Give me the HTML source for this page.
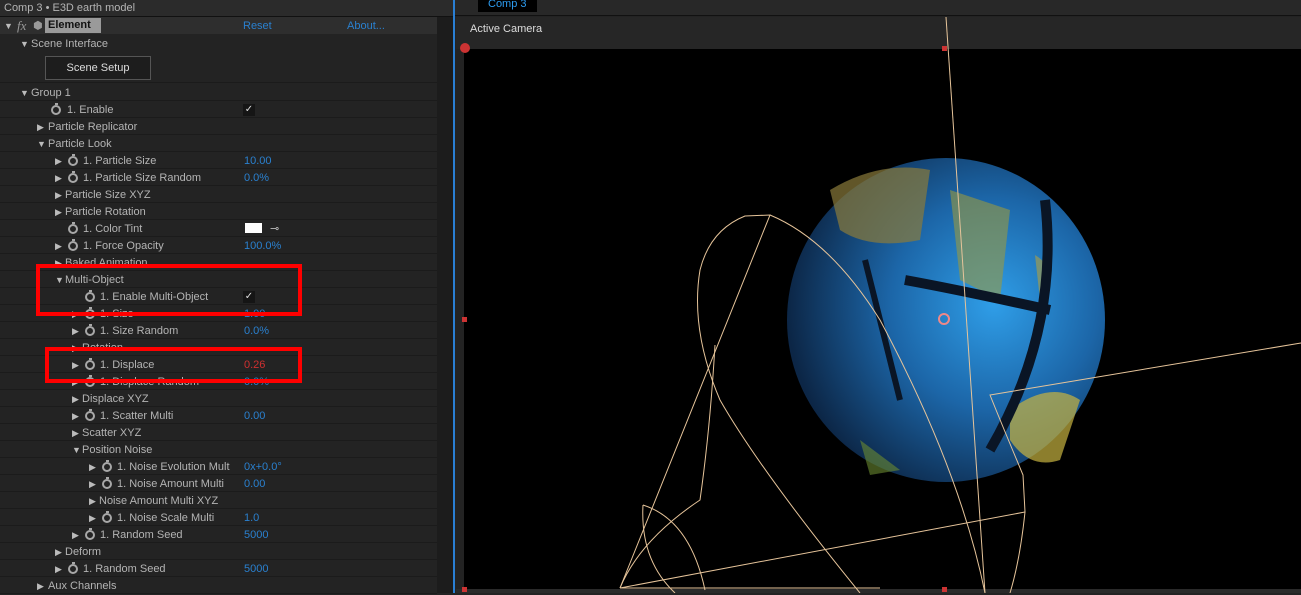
<!DOCTYPE html>
<html><head><style>
*{margin:0;padding:0;box-sizing:border-box}
body{width:1301px;height:593px;background:#232323;font-family:"Liberation Sans","DejaVu Sans",sans-serif;font-size:11px;color:#b4b4b4;position:relative;overflow:hidden}
.a{position:absolute;white-space:nowrap}
.row{position:absolute;left:0;width:437px;height:17px;border-bottom:1px solid #1b1b1b}
.t{position:absolute;line-height:18px}
.v{position:absolute;line-height:18px;color:#2a80cf}
.sw{position:absolute;width:10px;height:10px;border:2px solid #a8a8a8;border-radius:50%;top:4px}
.sw:before{content:"";position:absolute;left:2px;top:-4px;width:3px;height:2px;background:#a8a8a8}
.tri{position:absolute;font-size:9px;line-height:18px;color:#bbb}
.chk{position:absolute;width:12px;height:12px;background:#151515;color:#ddd;font-size:10px;line-height:12px;text-align:center;top:3px}
.rb{position:absolute;border:4px solid #f00}
</style></head><body>
<div class="a" style="left:0;top:0;width:454px;height:17px;background:#2b2b2b;border-bottom:1px solid #111"><span class="t" style="left:4px;top:-1px;position:absolute">Comp 3 • E3D earth model</span></div>
<div class="a" style="left:0;top:17px;width:437px;height:17px;background:#2e2e2e"></div>
<span class="tri" style="left:4px;top:17px">▼</span>
<span class="t" style="left:17px;top:17px;font-style:italic;color:#999;font-family:'Liberation Serif',serif;font-size:13px">fx</span>
<span class="t" style="left:33px;top:17px;color:#999">⬢</span>
<div class="a" style="left:45px;top:18px;width:56px;height:15px;background:#9a9a9a;color:#111;font-weight:bold;line-height:15px;padding-left:3px">Element</div>
<span class="v" style="left:243px;top:17px">Reset</span>
<span class="v" style="left:347px;top:17px">About...</span>
<span class="tri" style="left:20px;top:35px">▼</span><span class="t" style="left:31px;top:35px">Scene Interface</span>
<div class="a" style="left:45px;top:56px;width:106px;height:24px;background:#1d1d1d;border:1px solid #555;color:#ddd;text-align:center;line-height:22px;font-size:11px">Scene Setup</div>
<div class="row" style="top:66px;height:17px;border-bottom:1px solid #1b1b1b;background:transparent"></div>
<div id="rows"></div>
<div class="a" style="left:437px;top:17px;width:16px;height:576px;background:#1c1c1c"></div>
<div class="a" style="left:453px;top:0;width:2px;height:593px;background:#2a7fd4"></div>
<div class="a" style="left:455px;top:0;width:846px;height:16px;background:#282828;border-bottom:1px solid #111"></div>
<div class="a" style="left:478px;top:0;width:59px;height:12px;background:#000;color:#2d9cf0;line-height:9px;padding-left:10px">Comp 3</div>
<div class="a" style="left:456px;top:17px;width:845px;height:32px;background:#262626"></div>
<span class="a" style="left:470px;top:23px;color:#ddd">Active Camera</span>
<div class="a" style="left:464px;top:49px;width:837px;height:540px;background:#000"></div>
<div class="a" style="left:456px;top:589px;width:845px;height:4px;background:#2a2a2a"></div>
<svg class="a" style="left:0;top:0" width="1301" height="593">
<defs>
<radialGradient id="g" cx="0.65" cy="0.45" r="0.65">
<stop offset="0" stop-color="#2f9ee8"/><stop offset="0.5" stop-color="#1c66a8"/><stop offset="1" stop-color="#0c2646"/>
</radialGradient>
</defs>
<ellipse cx="946" cy="320" rx="159" ry="162" fill="url(#g)"/>
<path d="M830 190 Q880 160 930 170 L920 240 Q870 250 840 230Z" fill="#8a7a3a" opacity=".7"/>
<path d="M950 190 L1010 210 L1000 300 L960 280Z" fill="#9a9a40" opacity=".6"/>
<path d="M1010 410 Q1050 380 1080 400 L1060 460 Q1030 470 1010 440Z" fill="#c8b440" opacity=".7"/>
<path d="M1035 255 Q1060 270 1040 300 Z" fill="#b0a040" opacity=".6"/>
<path d="M860 440 L900 470 L870 475Z" fill="#6a8a30" opacity=".6"/>
<path d="M905 280 Q960 290 1050 310" stroke="#0a1525" stroke-width="10" fill="none"/>
<path d="M1045 200 Q1060 330 990 450" stroke="#0a1525" stroke-width="10" fill="none"/>
<path d="M865 260 L900 400" stroke="#0a1525" stroke-width="6" fill="none"/>
<g stroke="#e6c49a" stroke-width="1" fill="none">
<path d="M946 17 L985 593"/>
<path d="M620 588 L1025 512 L1023 475 Q1000 420 990 395 L1301 343"/>
<path d="M620 588 L770 215 L745 216 Q710 230 700 270 Q690 330 720 400 Q760 470 860 593"/>
<path d="M770 215 Q830 240 880 320 Q960 470 985 593"/>
<path d="M620 588 Q640 540 700 500 Q710 430 715 345"/>
<path d="M620 588 L880 588"/>
<path d="M643 505 Q690 520 705 590 M643 505 Q640 560 675 593"/>
<path d="M1025 512 Q1020 560 1010 593"/>
</g>
<circle cx="944" cy="319" r="5" fill="none" stroke="#e88" stroke-width="2"/>
<circle cx="465" cy="48" r="5" fill="#c33"/>
<rect x="942" y="46" width="5" height="5" fill="#c33"/>
<rect x="462" y="317" width="5" height="5" fill="#c33"/>
<rect x="942" y="587" width="5" height="5" fill="#c33"/>
<rect x="462" y="587" width="5" height="5" fill="#c33"/>
</svg>
<div class="rb" style="left:36px;top:264px;width:266px;height:52px"></div>
<div class="rb" style="left:45px;top:347px;width:257px;height:36px"></div>
<script>
var R=[
[92,'▼',20,0,31,'Group 1'],
[109,'',0,51,67,'1. Enable','chk'],
[126,'▶',37,0,48,'Particle Replicator'],
[143,'▼',37,0,48,'Particle Look'],
[160,'▶',55,68,83,'1. Particle Size','10.00'],
[177,'▶',55,68,83,'1. Particle Size Random','0.0%'],
[194,'▶',55,0,65,'Particle Size XYZ'],
[211,'▶',55,0,65,'Particle Rotation'],
[228,'',0,68,83,'1. Color Tint','tint'],
[245,'▶',55,68,83,'1. Force Opacity','100.0%'],
[262,'▶',55,0,65,'Baked Animation'],
[279,'▼',55,0,65,'Multi-Object'],
[296,'',0,85,100,'1. Enable Multi-Object','chk'],
[313,'▶',72,85,100,'1. Size','1.00'],
[330,'▶',72,85,100,'1. Size Random','0.0%'],
[347,'▶',72,0,82,'Rotation'],
[364,'▶',72,85,100,'1. Displace','R0.26'],
[381,'▶',72,85,100,'1. Displace Random','0.0%'],
[398,'▶',72,0,82,'Displace XYZ'],
[415,'▶',72,85,100,'1. Scatter Multi','0.00'],
[432,'▶',72,0,82,'Scatter XYZ'],
[449,'▼',72,0,82,'Position Noise'],
[466,'▶',89,102,117,'1. Noise Evolution Mult','0x+0.0°'],
[483,'▶',89,102,117,'1. Noise Amount Multi','0.00'],
[500,'▶',89,0,99,'Noise Amount Multi XYZ'],
[517,'▶',89,102,117,'1. Noise Scale Multi','1.0'],
[534,'▶',72,85,100,'1. Random Seed','5000'],
[551,'▶',55,0,65,'Deform'],
[568,'▶',55,68,83,'1. Random Seed','5000'],
[585,'▶',37,0,48,'Aux Channels']];
var h='';
R.forEach(function(r){var top=r[0]-8;h+='<div class="row" style="top:'+top+'px">';
if(r[1])h+='<span class="tri" style="left:'+r[2]+'px">'+r[1]+'</span>';
if(r[3])h+='<span class="sw" style="left:'+r[3]+'px"></span>';
h+='<span class="t" style="left:'+r[4]+'px">'+r[5]+'</span>';
var v=r[6];
if(v=='chk')h+='<span class="chk" style="left:243px">✓</span>';
else if(v=='tint')h+='<span class="a" style="left:245px;top:3px;width:17px;height:10px;background:#fff"></span><span class="t" style="left:270px;color:#bbb">⊸</span>';
else if(v&&v[0]=='R')h+='<span class="v" style="left:244px;color:#d03030">'+v.slice(1)+'</span>';
else if(v)h+='<span class="v" style="left:244px">'+v+'</span>';
h+='</div>';});
document.getElementById('rows').innerHTML=h;
</script>
</body></html>
